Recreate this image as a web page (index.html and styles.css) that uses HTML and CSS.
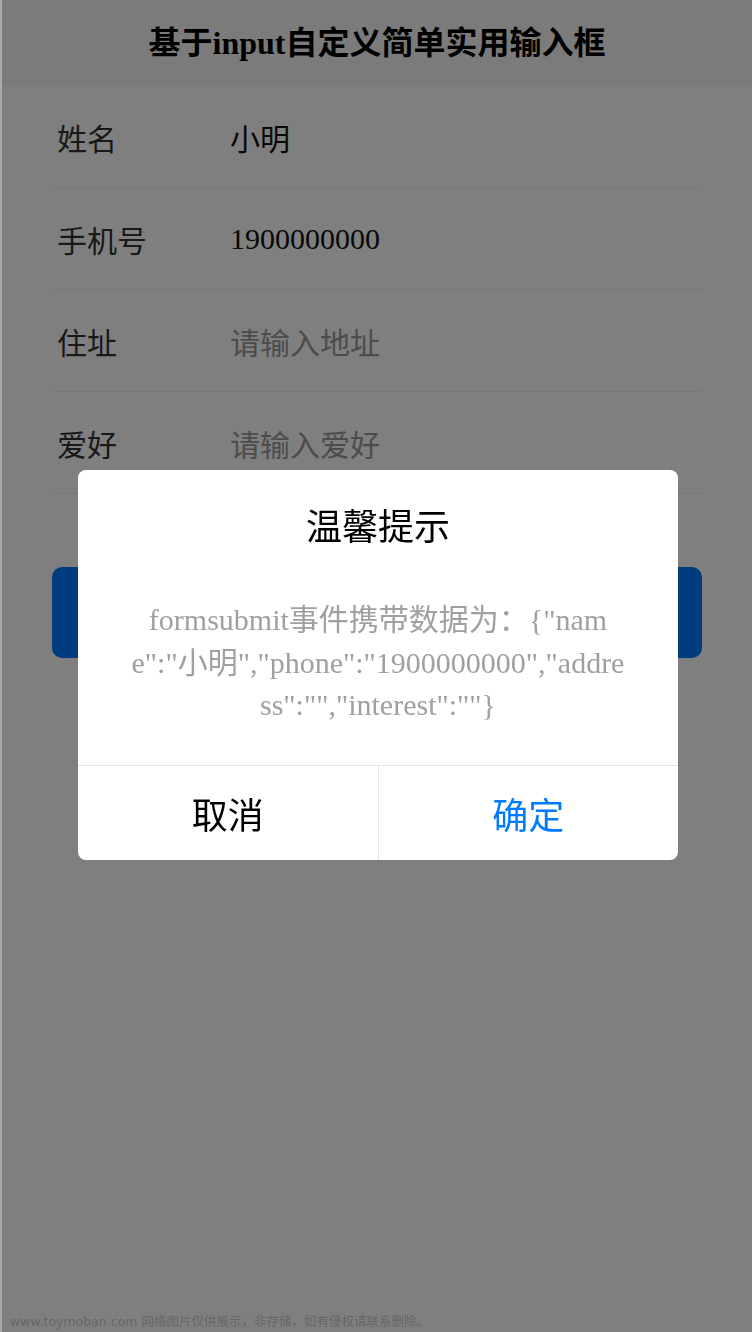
FILE: index.html
```html
<!DOCTYPE html>
<html lang="zh-CN">
<head>
<meta charset="utf-8">
<title>基于input自定义简单实用输入框</title>
<link rel="stylesheet" href="styles.css">
</head>
<body>
<div class="page">
  <header class="header">基于input自定义简单实用输入框</header>
  <form class="form">
    <div class="row"><span class="label">姓名</span><span class="value">小明</span></div>
    <div class="row"><span class="label">手机号</span><span class="value">1900000000</span></div>
    <div class="row"><span class="label">住址</span><span class="value placeholder">请输入地址</span></div>
    <div class="row"><span class="label">爱好</span><span class="value placeholder">请输入爱好</span></div>
    <div class="btn-wrap"><button type="button" class="submit" aria-label="提交"></button></div>
  </form>
  <div class="mask">
    <div class="dialog">
      <div class="dlg-content">
        <div class="dlg-title">温馨提示</div>
        <div class="dlg-body"><div class="dlg-line">formsubmit事件携带数据为：{"nam</div><div class="dlg-line">e":"小明","phone":"1900000000","addre</div><div class="dlg-line">ss":"","interest":""}</div></div>
      </div>
      <div class="dlg-actions">
        <div class="dlg-btn cancel">取消</div>
        <div class="dlg-btn confirm">确定</div>
      </div>
    </div>
  </div>
</div>
<div class="watermark">www.toymoban.com 网络图片仅供展示，非存储，如有侵权请联系删除。</div>
</body>
</html>
```
FILE: styles.css
```css
html, body {
  margin: 0;
  padding: 0;
  height: 100%;
}
html {
  background: #aaaaaa;
}
body {
  font-family: "Liberation Serif", "Noto Sans CJK SC", serif;
  overflow: hidden;
}
.page {
  position: relative;
  margin-left: 2px;
  height: 1332px;
  background: #ffffff;
}
.header {
  height: 86px;
  line-height: 86px;
  background: #f6f6f6;
  text-align: center;
  font-size: 32px;
  font-weight: bold;
  color: #000;
}
.form {
  margin: 0;
  padding: 0 50px;
}
.row {
  display: flex;
  align-items: center;
  height: 101px;
  border-bottom: 1px solid #efefef;
  font-size: 30px;
}
.label {
  width: 173px;
  padding-left: 5px;
  color: #333;
}
.value {
  color: #111;
}
.placeholder {
  color: #999;
}
.btn-wrap {
  padding-top: 73px;
}
.submit {
  display: block;
  width: 100%;
  height: 91px;
  border: none;
  border-radius: 10px;
  background: #007bff;
}
.mask {
  position: fixed;
  top: 0;
  bottom: 0;
  left: 2px;
  right: 0;
  background: rgba(0, 0, 0, 0.5);
  display: flex;
  align-items: center;
  justify-content: center;
}
.dialog {
  width: 600px;
  height: 390px;
  margin-left: 2px;
  margin-top: -2px;
  background: #fff;
  border-radius: 8px;
  overflow: hidden;
  display: flex;
  flex-direction: column;
}
.dlg-content {
  padding: 33px 40px 38px;
  text-align: center;
}
.dlg-title {
  font-size: 36px;
  line-height: 50px;
  color: #000;
}
.dlg-body {
  margin-top: 46px;
  font-size: 30px;
  color: #a0a0a0;
  white-space: nowrap;
}
.dlg-line {
  height: 42.5px;
  line-height: 42.5px;
}
.dlg-actions {
  display: flex;
  flex: 1;
  border-top: 1px solid #e3e3e3;
}
.dlg-btn {
  flex: 1;
  display: flex;
  align-items: center;
  justify-content: center;
  font-size: 36px;
}
.cancel {
  color: #000;
  border-right: 1px solid #e3e3e3;
}
.confirm {
  color: #007aff;
}
.watermark {
  position: fixed;
  left: 10px;
  bottom: 1px;
  font-family: "DejaVu Sans", "Noto Sans CJK SC", sans-serif;
  font-size: 12.5px;
  line-height: 18px;
  color: #666666;
}
```
